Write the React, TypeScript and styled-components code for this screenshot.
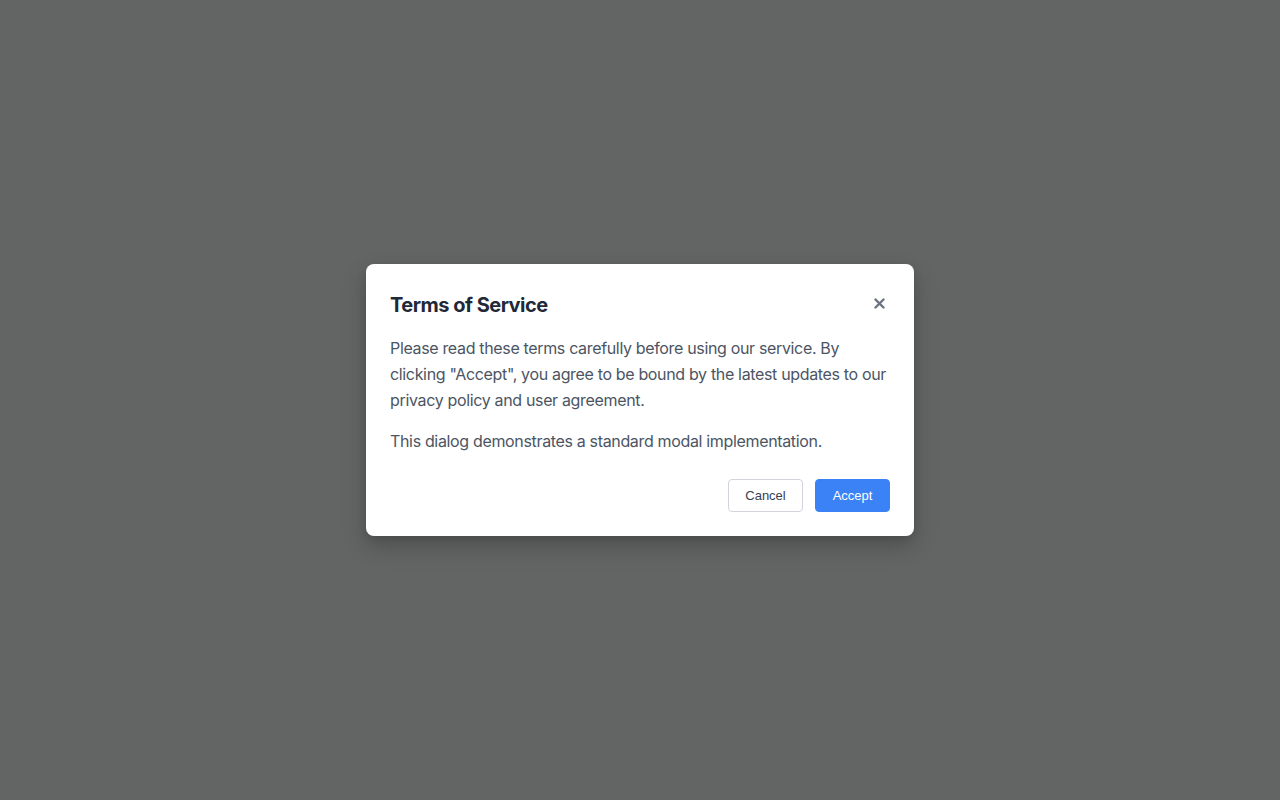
import React from 'react';
import styled, {createGlobalStyle} from 'styled-components';

const GlobalStyle = createGlobalStyle`
  html, body {
    margin: 0;
    padding: 0;
    height: 100%;
  }
  body {
    font-family: Inter, "Noto Sans", sans-serif;
    background: #636564;
  }
  #root {
    height: 100%;
  }
`;

const Overlay = styled.div`
  height: 100vh;
  width: 100vw;
  display: flex;
  align-items: center;
  justify-content: center;
  background-color: #636564;
`;

const Modal = styled.div`
  width: 500px;
  padding: 24px;
  background: #ffffff;
  border-radius: 8px;
  box-shadow: 0 10px 25px rgba(0, 0, 0, 0.2), 0 4px 10px rgba(0, 0, 0, 0.1);
`;

const Header = styled.div`
  display: flex;
  align-items: center;
  justify-content: space-between;
  height: 31px;
  margin-bottom: 16px;
`;

const Title = styled.h2`
  margin: 0;
  font-size: 20px;
  font-weight: 700;
  letter-spacing: -0.5px;
  color: #1f2937;
  line-height: 30px;
  padding-top: 3px;
`;

const CloseButton = styled.button`
  border: none;
  background: transparent;
  padding: 0;
  width: 22px;
  height: 22px;
  display: flex;
  align-items: center;
  justify-content: center;
  color: #6b7280;
  cursor: pointer;
`;

const Paragraph = styled.p`
  margin: 0 0 15px;
  font-size: 16px;
  line-height: 26px;
  letter-spacing: -0.34px;
  color: #4b5563;
  &:last-of-type {
    margin-bottom: 0;
  }
`;

const Footer = styled.div`
  display: flex;
  justify-content: flex-end;
  gap: 12px;
  margin-top: 25px;
`;

const Button = styled.button<{primary?: boolean}>`
  box-sizing: border-box;
  height: 33px;
  padding: 0 16px;
  font-family: "Liberation Sans", Arial, sans-serif;
  font-size: 13px;
  border-radius: 4px;
  cursor: pointer;
  border: 1px solid ${(props) => (props.primary ? '#3b82f6' : '#d1d5db')};
  background: ${(props) => (props.primary ? '#3b82f6' : '#ffffff')};
  color: ${(props) => (props.primary ? '#ffffff' : '#374151')};
  min-width: 75px;
`;

const CloseIcon = () => (
  <svg width="11" height="11" viewBox="0 0 11 11">
    <path d="M1.5 1.5 L9.5 9.5 M9.5 1.5 L1.5 9.5" stroke="currentColor" strokeWidth="2.4" strokeLinecap="round"/>
  </svg>
);

const App = () => {
  return (
    <>
      <GlobalStyle/>
      <Overlay>
        <Modal>
          <Header>
            <Title>Terms of Service</Title>
            <CloseButton aria-label="Close"><CloseIcon/></CloseButton>
          </Header>
          <div>
            <Paragraph>
              Please read these terms carefully before using our service. By clicking "Accept", you agree to be bound
              by the latest updates to our privacy policy and user agreement.
            </Paragraph>
            <Paragraph>This dialog demonstrates a standard modal implementation.</Paragraph>
          </div>
          <Footer>
            <Button>Cancel</Button>
            <Button primary>Accept</Button>
          </Footer>
        </Modal>
      </Overlay>
    </>
  );
};

export default App;
